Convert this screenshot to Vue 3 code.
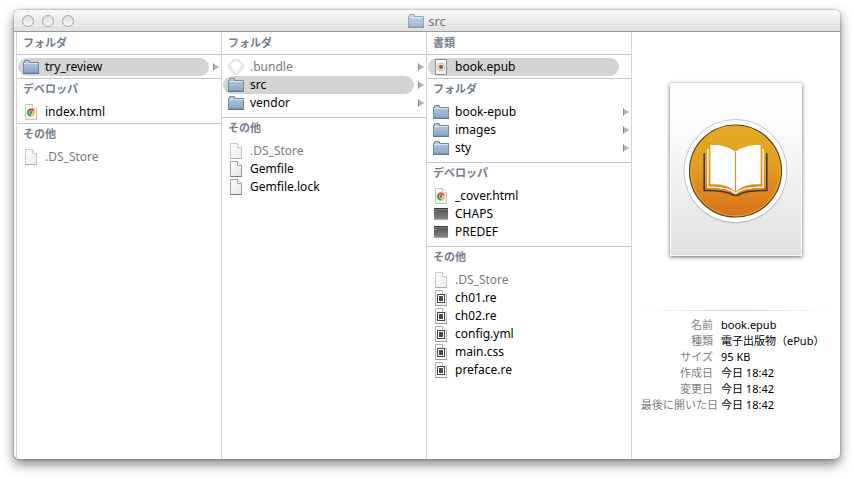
<template>
  <div class="desktop">
    <main class="window">
      <header class="titlebar">
        <div class="controls">
          <button v-for="name in controls" :key="name" type="button" :aria-label="name"></button>
        </div>
        <h1 class="title">
          <svg class="icon" viewBox="0 0 16 16" aria-hidden="true"><use href="#icon-folder" /></svg>
          <span>src</span>
        </h1>
      </header>

      <div class="browser">
        <div class="previous"></div>
        <div v-for="column in columns" :key="column.id" class="column">
          <section v-for="group in column.groups" :key="group.label" class="group" :class="{ single: group.items.length === 1 }">
            <h2>{{ group.label }}</h2>
            <ul>
              <li v-for="item in group.items" :key="item.name">
                <button type="button" class="row" :class="{ selected: item.selected, hidden: item.hidden }">
                  <svg class="icon" viewBox="0 0 16 16" aria-hidden="true"><use :href="'#icon-' + item.icon" /></svg>
                  <span>{{ item.name }}</span>
                </button>
                <svg v-if="item.open" class="arrow" viewBox="0 0 7 8" aria-hidden="true">
                  <path d="M.5 .8 6.5 4 .5 7.2z" fill="#b4b4b4" />
                  <path d="M.5 .5v7" stroke="#858585" />
                </svg>
              </li>
            </ul>
          </section>
        </div>

        <aside class="preview">
          <svg class="cover" viewBox="0 0 132 173" role="img" aria-label="book.epub">
            <rect width="132" height="173" fill="url(#paper)" />
            <rect x=".5" y=".5" width="131" height="172" fill="none" stroke="#fff" stroke-opacity=".8" />
            <circle cx="65.5" cy="89" r="51.5" fill="#999" opacity=".35" />
            <circle cx="65.5" cy="88" r="51.5" fill="#fff" stroke="#b8b8b8" stroke-width=".8" />
            <circle cx="65.5" cy="88" r="46" fill="url(#orange)" stroke="#57431f" stroke-width="1.2" />
            <circle cx="65.5" cy="88" r="44.9" fill="none" stroke="#f0ad30" stroke-width=".8" />
            <!-- back cover, inner pages, front pages -->
            <g fill="none">
              <path d="M34.2 70.300v37.200c12-.2 20 .5 26 3 2.500 2.600 8.100 2.600 10.600 0 6-2.500 14-3.200 26-3V70.300" stroke="#3f3a35" stroke-width="1.600" />
              <path d="M37.800 66v38.200c12-.3 22 .8 27.700 6.300 5.700-5.500 15.700-6.600 27.700-6.300V66" stroke="#fff" stroke-width="1.400" />
            </g>
            <path d="M40.400 62c9-.2 18 1.400 25.100 6.800C72.600 63.400 81.600 61.800 90.600 62v39.300c-10-.3-19.500 1.200-25.100 8-5.600-6.800-15.100-8.300-25.100-8z" fill="#fff" />
            <path d="M65.500 68.800v41" stroke="#e29022" stroke-width="1.200" />
          </svg>
          <dl>
            <template v-for="row in details" :key="row.label">
              <dt>{{ row.label }}</dt>
              <dd>{{ row.value }}</dd>
            </template>
          </dl>
        </aside>
      </div>
    </main>

    <!-- shared icon shapes -->
    <svg class="sprite" aria-hidden="true">
      <defs>
        <linearGradient id="paper" x2="0" y2="1">
          <stop offset="0" stop-color="#fff" />
          <stop offset=".18" stop-color="#fefefe" />
          <stop offset="1" stop-color="#e1e1e1" />
        </linearGradient>
        <linearGradient id="orange" x2="0" y2="1">
          <stop offset="0" stop-color="#e3aa20" />
          <stop offset=".4" stop-color="#e3a024" />
          <stop offset="1" stop-color="#d8701b" />
        </linearGradient>
        <linearGradient id="blue" x2="0" y2="1">
          <stop offset="0" stop-color="#b9cfe3" />
          <stop offset="1" stop-color="#86a6c6" />
        </linearGradient>
        <linearGradient id="dark" x2="0" y2="1">
          <stop offset="0" stop-color="#4b4b4b" />
          <stop offset="1" stop-color="#858585" />
        </linearGradient>
        <linearGradient id="sheet" x2="1" y2="1">
          <stop offset="0" stop-color="#fff" />
          <stop offset="1" stop-color="#e2e2e2" />
        </linearGradient>
      </defs>
      <symbol id="icon-folder" viewBox="0 0 16 16">
        <path d="M.5 14V3.5h1V2q0-.5.5-.5h4q.5 0 .5.5v1.5h9V14z" fill="url(#blue)" stroke="#6d89a6" />
        <path d="M1 4.5h14" stroke="#d5e3ef" />
        <path d="M0 14.500h16" stroke="#5f7892" />
      </symbol>
      <symbol id="icon-file" viewBox="0 0 16 16">
        <path d="M2.5 .5h7l4 4v11h-11z" fill="url(#sheet)" stroke="#a4a4a4" />
        <path d="M9.5 .5v4h4" fill="#fff" stroke="#aaa" />
        <path d="M2 15.5h12" stroke="#7c7c7c" />
      </symbol>
      <symbol id="icon-html" viewBox="0 0 16 16">
        <path d="M2.5 .5h7l4 4v11h-11z" fill="#f8f8f8" stroke="#c2c2c2" />
        <path d="M9.5 .5v4h4" fill="#fff" stroke="#ccc" />
        <circle cx="8" cy="8.5" r="4" fill="#f1c534" />
        <path d="M8 8.5 4.500 6.500A4 4 0 0 1 11.500 6.500z" fill="#d8463a" />
        <path d="M8 8.5 4.500 6.500A4 4 0 0 0 8 12.500z" fill="#43a047" />
        <circle cx="8" cy="8.5" r="1.9" fill="#fff" />
        <circle cx="8" cy="8.5" r="1.4" fill="#3f78c5" />
      </symbol>
      <symbol id="icon-source" viewBox="0 0 16 16">
        <path d="M2.5 .5h7l4 4v11h-11z" fill="#fafafa" stroke="#b4b4b4" />
        <path d="M9.5 .5v4h4" fill="#fff" stroke="#bbb" />
        <path d="M4 4h8v9H4z" fill="#fff" />
        <path d="M4.5 13V4.500H12M4 12.500h8M11.500 4v9" fill="none" stroke="#444" />
        <path d="M6 6h4v5H6z" fill="#4a4a4a" />
        <path d="M2 15.5h12" stroke="#999" />
      </symbol>
      <symbol id="icon-terminal" viewBox="0 0 16 16">
        <path d="M1 2h14v11H1z" fill="url(#dark)" />
        <path d="M1 2.500h14" stroke="#383838" />
        <path d="M1 3.500h14" stroke="#777" />
        <path d="M2 5.500h2" stroke="#8d9b8d" />
        <path d="M1 13.500h14" stroke="#aaa" />
      </symbol>
      <symbol id="icon-epub" viewBox="0 0 16 16">
        <path d="M2.5 .5h11v15h-11z" fill="#f6f6f6" stroke="#8e8e8e" />
        <circle cx="8" cy="8" r="3.8" fill="#fff" stroke="#aaa" stroke-width=".8" />
        <circle cx="8" cy="8" r="2.4" fill="#c8742d" />
        <path d="M7 7h2v2H7z" fill="#8d4a20" />
      </symbol>
      <symbol id="icon-bundle" viewBox="0 0 16 16">
        <path d="M4 1.500 8 .5l4 1 3.500 4-1 5L8 15.500l-6.500-5-1-5z" fill="#e4e4e4" stroke="#c4c4c4" />
        <path d="M4 4 8 3l4 1 1.500 3L8 12.500 2.500 7z" fill="#fff" />
      </symbol>
    </svg>
  </div>
</template>

<script setup>
const controls = ['close', 'minimize', 'zoom'];

const columns = [
  {
    id: 'root',
    groups: [
      { label: 'フォルダ', items: [{ name: 'try_review', icon: 'folder', open: true, selected: true }] },
      { label: 'デベロッパ', items: [{ name: 'index.html', icon: 'html' }] },
      { label: 'その他', items: [{ name: '.DS_Store', icon: 'file', hidden: true }] }
    ]
  },
  {
    id: 'try_review',
    groups: [
      {
        label: 'フォルダ',
        items: [
          { name: '.bundle', icon: 'bundle', open: true, hidden: true },
          { name: 'src', icon: 'folder', open: true, selected: true },
          { name: 'vendor', icon: 'folder', open: true }
        ]
      },
      {
        label: 'その他',
        items: [
          { name: '.DS_Store', icon: 'file', hidden: true },
          { name: 'Gemfile', icon: 'file' },
          { name: 'Gemfile.lock', icon: 'file' }
        ]
      }
    ]
  },
  {
    id: 'src',
    groups: [
      { label: '書類', items: [{ name: 'book.epub', icon: 'epub', selected: true }] },
      {
        label: 'フォルダ',
        items: [
          { name: 'book-epub', icon: 'folder', open: true },
          { name: 'images', icon: 'folder', open: true },
          { name: 'sty', icon: 'folder', open: true }
        ]
      },
      {
        label: 'デベロッパ',
        items: [
          { name: '_cover.html', icon: 'html' },
          { name: 'CHAPS', icon: 'terminal' },
          { name: 'PREDEF', icon: 'terminal' }
        ]
      },
      {
        label: 'その他',
        items: [
          { name: '.DS_Store', icon: 'file', hidden: true },
          { name: 'ch01.re', icon: 'source' },
          { name: 'ch02.re', icon: 'source' },
          { name: 'config.yml', icon: 'source' },
          { name: 'main.css', icon: 'source' },
          { name: 'preface.re', icon: 'source' }
        ]
      }
    ]
  }
];

const details = [
  { label: '名前', value: 'book.epub' },
  { label: '種類', value: '電子出版物（ePub）' },
  { label: 'サイズ', value: '95 KB' },
  { label: '作成日', value: '今日 18:42' },
  { label: '変更日', value: '今日 18:42' },
  { label: '最後に開いた日', value: '今日 18:42' }
];
</script>

<style>
body {
  margin: 0;
  background: #fff;
}
</style>

<style scoped>
.desktop {
  display: flex;
  box-sizing: border-box;
  min-height: 100vh;
  padding: 10px 14px 20px;
  font-family: "Noto Sans", "Noto Sans CJK JP", sans-serif;
  font-size: 12px;
  color: #000;
}

.window {
  display: flex;
  flex: 1;
  flex-direction: column;
  border-radius: 5px;
  background: #fff;
  box-shadow: 0 0 2px rgba(0, 0, 0, 0.5), 0 5px 12px rgba(0, 0, 0, 0.5);
}

.titlebar {
  display: grid;
  grid-template-columns: 1fr auto 1fr;
  align-items: center;
  height: 21px;
  border-bottom: 1px solid #989898;
  border-radius: 5px 5px 0 0;
  background: linear-gradient(#fafafa, #e0e0e0);
}

.controls {
  display: flex;
  gap: 8px;
  padding-left: 8px;
}

.controls button {
  width: 12px;
  height: 12px;
  padding: 0;
  border: 1px solid #a5a5a5;
  border-radius: 50%;
  background: linear-gradient(#dedede, #f8f8f8);
}

.title {
  display: flex;
  align-items: center;
  gap: 4px;
  margin: 0;
  font-size: 13px;
  font-weight: 400;
  line-height: 20px;
  color: #777;
}

.title .icon {
  opacity: 0.7;
}

.icon {
  flex: none;
  width: 16px;
  height: 16px;
}

.browser {
  display: grid;
  flex: 1;
  grid-template-columns: 3px repeat(3, 205fr) 208fr;
}

.previous,
.column {
  border-right: 1px solid #d6d6d6;
}

.group {
  padding-bottom: 5px;
  border-bottom: 1px solid #c6c6c6;
}

.group.single {
  padding-bottom: 2px;
}

.group:last-child {
  border-bottom: 0;
}

.group h2 {
  height: 24px;
  margin: 0;
  padding-left: 6px;
  font-size: 11px;
  font-weight: 700;
  line-height: 20px;
  color: #727d8e;
}

.group:first-child h2 {
  height: 22px;
  margin-bottom: 3px;
  border-bottom: 1px solid #c6c6c6;
  line-height: 22px;
}

.group ul {
  margin: 0;
  padding: 0;
  list-style: none;
}

.group li {
  display: flex;
  align-items: center;
  height: 18px;
  padding: 0 1px;
}

.row {
  display: flex;
  flex: 0 1 191px;
  align-items: center;
  gap: 6px;
  height: 18px;
  padding: 0 5px;
  border: 0;
  border-radius: 9px;
  background: none;
  font: inherit;
  line-height: 18px;
  color: inherit;
}

.row.selected {
  background: #d4d4d4;
}

.row.hidden {
  color: #7c7c7c;
}

.row.hidden .icon {
  opacity: 0.6;
}

.arrow {
  width: 7px;
  height: 8px;
  margin-left: auto;
}

.preview {
  display: flex;
  flex-direction: column;
  padding: 51px 9px 20px;
}

.cover {
  align-self: center;
  width: 132px;
  height: 173px;
  background: #fff;
  box-shadow: 0 1px 4px rgba(0, 0, 0, 0.6);
}

.preview dl {
  display: grid;
  grid-template-columns: 77px 1fr;
  column-gap: 3px;
  margin: 54px 0 0;
  padding-top: 7px;
  background: linear-gradient(90deg, #fff, #d4d4d4 50%, #fff) top / 100% 1px no-repeat;
  font-size: 11px;
  line-height: 16px;
  white-space: nowrap;
}

.preview dt {
  padding-right: 5px;
  text-align: right;
  color: #808080;
}

.preview dd {
  margin: 0;
}

.sprite {
  position: absolute;
  width: 0;
  height: 0;
}
</style>
